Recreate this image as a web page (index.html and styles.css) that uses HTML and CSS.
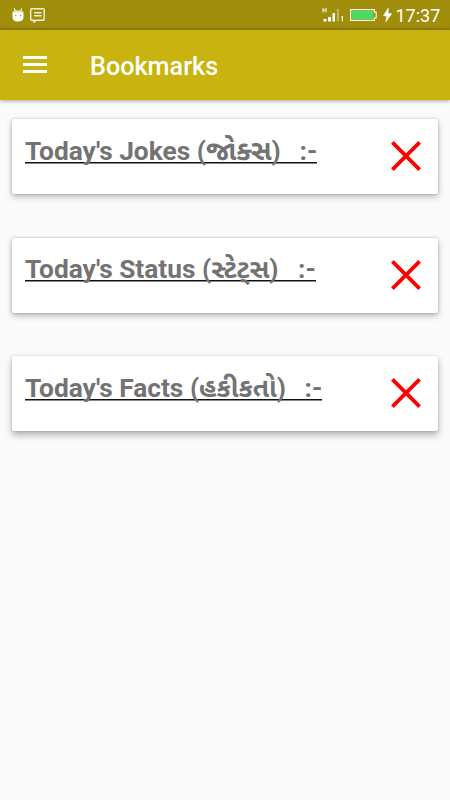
FILE: index.html
```html
<!DOCTYPE html>
<html lang="en">
<head>
<meta charset="utf-8">
<title>Bookmarks</title>
<link rel="stylesheet" href="styles.css">
</head>
<body>
<div class="status">
  <svg class="robot" width="12" height="14" viewBox="0 0 12 14" fill="#fff"><path d="M2 .3l.9-.1.5 2.2h5.2l.5-2.2.9.1-.3 3H2.3z"/><path d="M.5 4.500Q1 3 3 3h6q2 0 2.500 1.500V9q0 4.500-5.500 4.500T.5 9z"/><path d="M2 3.300h8v1H2z" fill="#dcd8a8"/><circle cx="3.600" cy="7.600" r=".7" fill="#9f8d0b"/><circle cx="8.700" cy="7.600" r=".7" fill="#9f8d0b"/></svg>
  <svg class="message" width="15" height="15" viewBox="0 0 15 15" fill="none" stroke="#f2f0df" stroke-width="1.400"><path d="M1.700.8h11.500q1 0 1 1v9.500q0 1-1 1H6L4 14.200v-1.900H1.700q-1 0-1-1V1.800q0-1 1-1zM4 4.700h7.500M4 7.700h7.500"/></svg>
  <div class="spacer"></div>
  <svg class="signal" width="23" height="16" viewBox="0 0 23 16" fill="#fff"><path d="M.5 1h1v1.500h2V1h1v4.500h-1v-2h-2v2h-1zM1.500 12h3v2.500h-3zM6 10h3v4.500H6zM10.500 6H13v8.500h-2.500z"/><path d="M14.800 2H17v12.500h-2.200z" opacity=".35"/><path d="M19 9.800l1-.5h1v5h-1.200v-4H19z"/></svg>
  <svg class="battery" width="27" height="12" viewBox="0 0 27 12"><path d="M.6.6h23.800v2.500h1.800v5.800h-1.800v2.500H.6z" fill="none" stroke="#f5f3dd" stroke-width="1.200"/><path d="M1.500 1.500h22v9h-22z" fill="#4cd964"/></svg>
  <svg class="bolt" width="9" height="14" viewBox="0 0 9 14" fill="#fff" stroke="#fff" stroke-width=".6"><path d="M5.300.2L.5 7.500l3.300.7-1 5.600L8.600 5.800l-3.500-.5z"/></svg>
  <span class="time">17:37</span>
</div>
<header class="bar">
  <svg class="menu" width="24" height="18" viewBox="0 0 24 18" fill="#fff"><path d="M0 0h24v3H0zM0 7h24v3H0zM0 14h24v3H0z"/></svg>
  <h1>Bookmarks</h1>
</header>
<main class="list">
  <section class="card">
    <div class="title jokes"><span>Today's Jokes (</span><span class="gu">જોક્સ</span><span>)</span><span class="mark">:-</span></div>
    <svg class="close" width="30" height="30" viewBox="0 0 30 30"><path d="M1.400 1.400l27.200 27.200M28.600 1.400L1.400 28.600"/></svg>
  </section>
  <section class="card">
    <div class="title state"><span>Today's Status (</span><span class="gu">સ્ટેટ્સ</span><span>)</span><span class="mark">:-</span></div>
    <svg class="close" width="30" height="30" viewBox="0 0 30 30"><path d="M1.400 1.400l27.200 27.200M28.600 1.400L1.400 28.600"/></svg>
  </section>
  <section class="card">
    <div class="title facts"><span>Today's Facts (</span><span class="gu">હકીકતો</span><span>)</span><span class="mark">:-</span></div>
    <svg class="close" width="30" height="30" viewBox="0 0 30 30"><path d="M1.400 1.400l27.200 27.200M28.600 1.400L1.400 28.600"/></svg>
  </section>
</main>
</body>
</html>
```
FILE: styles.css
```css
* { box-sizing: border-box; }
body { margin: 0; height: 800px; overflow: hidden; background: #fafafa; font-family: Roboto, "Noto Sans Gujarati", "Noto Sans", sans-serif; }
svg { display: block; flex: none; }
.status { height: 30px; display: flex; align-items: flex-start; padding: 0 10.500px 0 11.500px; background: linear-gradient(#9f8d0b 27px, #8f7e0a 30px); color: #fff; }
.robot { margin-top: 8px; }
.message { margin: 8px 0 0 6.500px; }
.spacer { flex: 1; }
.signal { margin-top: 7px; }
.battery { margin: 9px 0 0 5px; }
.bolt { margin: 8px 4px 0 6px; }
.time { width: 44px; margin-top: 5px; font-size: 18px; line-height: 22px; white-space: nowrap; }
.bar { height: 70px; display: flex; align-items: center; padding: 0 23px; background: #c9b40f; box-shadow: 0 1px 4px rgba(0,0,0,.35); }
.menu { margin-top: 0; }
h1 { margin: 3px 0 0 43px; font-size: 25.200px; line-height: 30px; font-weight: 500; color: #fff; }
.list { display: flex; flex-direction: column; gap: 43.500px; padding: 19px 12px; }
.card { height: 75px; display: flex; justify-content: space-between; align-items: flex-start; padding: 16px 17.500px 0 13px; border-radius: 2px; background: #fff; box-shadow: 0 0 3px rgba(0,0,0,.2), 0 3px 6px rgba(0,0,0,.25); }
.card:nth-child(2) { padding-top: 15.500px; }
.card:nth-child(3) { box-shadow: 0 0 2px rgba(0,0,0,.2), 0 4px 7px rgba(0,0,0,.3); }
.title { display: flex; height: 30px; font-size: 26.300px; line-height: 32px; font-weight: 700; color: #737373; white-space: nowrap; background: linear-gradient(#111, #111) 0 26.500px / 100% 1.500px no-repeat; }
.jokes { width: 292.400px; }
.jokes .gu { font-size: 27.200px; }
.state { width: 290.900px; background-position: 0 27px; }
.facts { width: 297.400px; }
.mark { margin-left: auto; }
.close { margin: 6px 0 0; fill: none; stroke: #f00; stroke-width: 3.800; }
.card:nth-child(2) .close { margin-top: 7px; }
```
